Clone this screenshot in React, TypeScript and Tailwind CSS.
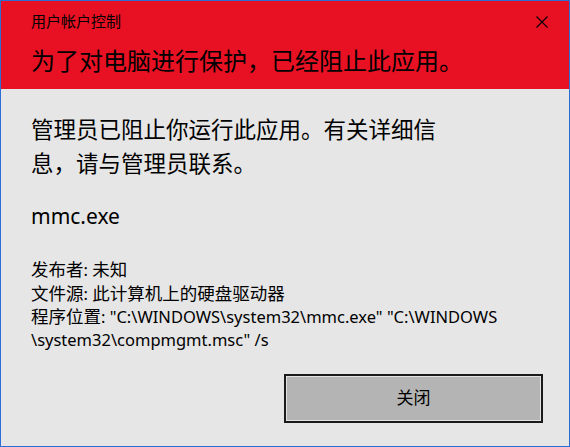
import React from 'react';

const font = { fontFamily: '"Noto Sans", "Noto Sans CJK SC", sans-serif' };

const CloseIcon: React.FC = () => (
  <svg width="12" height="12" viewBox="0 0 12 12" className="block">
    <path d="M0.5 0.5 L11.5 11.5 M11.5 0.5 L0.5 11.5" stroke="#000" strokeWidth="1.1" fill="none" />
  </svg>
);

// CJK glyphs in the details block sit a bit larger than the latin ones
const Hz: React.FC<{ children: React.ReactNode }> = ({ children }) => (
  <span className="text-[17.5px]">{children}</span>
);

export default function App() {
  return (
    <div
      className="w-[570px] h-[447px] border border-[#2b6fd6] bg-[#e6e6e6] flex flex-col text-black overflow-hidden"
      style={font}
    >
      {/* red banner */}
      <div className="h-[88px] shrink-0 bg-[#e81123] pl-[30px] pr-[21px] pt-[10px]">
        <div className="flex items-start justify-between">
          <div className="text-[15px] leading-[20px]">用户帐户控制</div>
          <button className="mt-[5px] p-0">
            <CloseIcon />
          </button>
        </div>
        <div className="mt-[14px] text-[24px] leading-[32px]">
          为了对电脑进行保护，已经阻止此应用。
        </div>
      </div>

      {/* body */}
      <div className="flex-1 flex flex-col pl-[30px] pr-[26px] pt-[24px]">
        <p className="w-[415px] text-[22.5px] leading-[34px]">
          管理员已阻止你运行此应用。有关详细信息，请与管理员联系。
        </p>
        <p className="mt-[21px] text-[21px] leading-[28px]">mmc.exe</p>
        <div className="mt-[28px] text-[16.5px] leading-[22.7px]">
          <p>
            <Hz>发布者</Hz>: <Hz>未知</Hz>
          </p>
          <p>
            <Hz>文件源</Hz>: <Hz>此计算机上的硬盘驱动器</Hz>
          </p>
          <p>
            <Hz>程序位置</Hz>: "C:\WINDOWS\system32\mmc.exe" "C:\WINDOWS
            <br />
            \system32\compmgmt.msc" /s
          </p>
        </div>
        <div className="mt-[22px] flex justify-end">
          <button className="w-[259px] h-[49px] border-2 border-[#1a1a1a] bg-[#b4b4b4] flex items-center justify-center p-0">
            <span className="w-full h-full border border-[#e2e2e2] flex items-center justify-center text-[17px] leading-[24px]">
              关闭
            </span>
          </button>
        </div>
      </div>
    </div>
  );
}
